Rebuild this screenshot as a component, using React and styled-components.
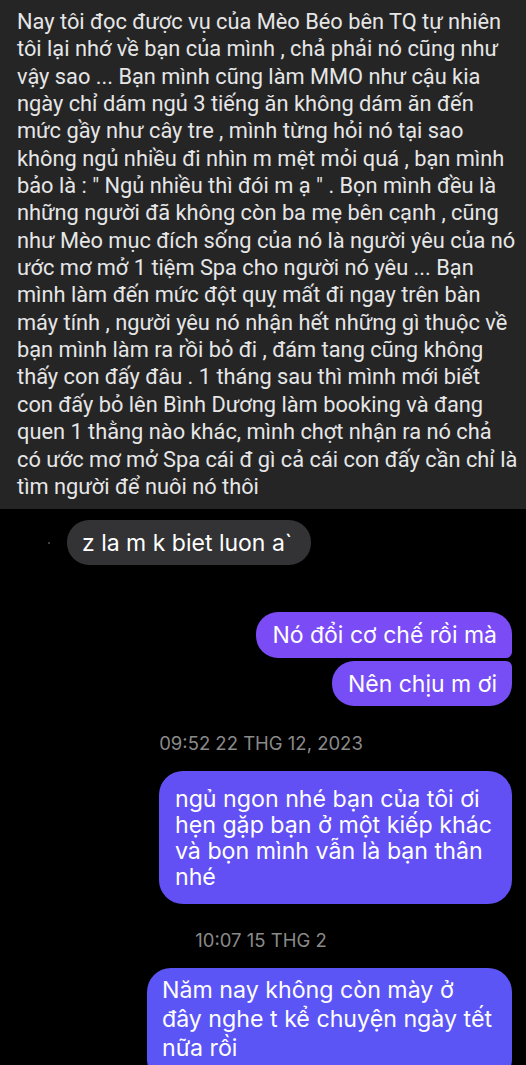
import React from "react";
import styled, { createGlobalStyle } from "styled-components";

const Global = createGlobalStyle`
  html, body { margin: 0; padding: 0; background: #000; }
  body { overflow: hidden; }
  #root { width: 526px; height: 1065px; overflow: hidden; }
`;

const Page = styled.div`
  width: 526px;
  height: 1065px;
  display: flex;
  flex-direction: column;
  background: #000;
  overflow: hidden;
`;

const Post = styled.div`
  flex-shrink: 0;
  background: #252526;
  height: 509px;
  box-sizing: border-box;
  padding: 8px 0 0 17px;
  font-family: Roboto, "Noto Sans", sans-serif;
  font-size: 21.8px;
  line-height: 27.35px;
  color: #e6e6e6;
`;

const Line = styled.div`
  white-space: nowrap;
`;

const Chat = styled.div`
  flex-shrink: 0;
  display: flex;
  flex-direction: column;
  padding: 11px 14px 0 0;
  font-family: Inter, "Noto Sans", sans-serif;
  color: #fff;
`;

const IncomingRow = styled.div`
  display: flex;
  align-items: center;
  gap: 17px;
  padding-left: 48px;
`;

const Dot = styled.span`
  width: 2px;
  height: 2px;
  border-radius: 50%;
  background: #555;
`;

const Bubble = styled.div`
  align-self: ${(p) => (p.$in ? "flex-start" : "flex-end")};
  background: ${(p) => p.$bg};
  color: #fff;
  font-size: ${(p) => p.$fs || 23}px;
  line-height: ${(p) => p.$lh || 26}px;
  padding: ${(p) => p.$pad};
  border-radius: ${(p) => p.$radius || "22px"};
  margin-top: ${(p) => p.$mt || 0}px;
  white-space: nowrap;
`;

const Stamp = styled.div`
  align-self: center;
  margin-left: 10px;
  color: #8a8a8a;
  font-size: 18.5px;
  line-height: 22px;
  margin-top: ${(p) => p.$mt}px;
`;

const postLines = [
  "Nay tôi đọc được vụ của Mèo Béo bên TQ tự nhiên",
  "tôi lại nhớ về bạn của mình , chả phải nó cũng như",
  "vậy sao ... Bạn mình cũng làm MMO như cậu kia",
  "ngày chỉ dám ngủ 3 tiếng ăn không dám ăn đến",
  "mức gầy như cây tre , mình từng hỏi nó tại sao",
  "không ngủ nhiều đi nhìn m mệt mỏi quá , bạn mình",
  "bảo là : \" Ngủ nhiều thì đói m ạ \" . Bọn mình đều là",
  "những người đã không còn ba mẹ bên cạnh , cũng",
  "như Mèo mục đích sống của nó là người yêu của nó",
  "ước mơ mở 1 tiệm Spa cho người nó yêu ... Bạn",
  "mình làm đến mức đột quỵ mất đi ngay trên bàn",
  "máy tính , người yêu nó nhận hết những gì thuộc về",
  "bạn mình làm ra rồi bỏ đi , đám tang cũng không",
  "thấy con đấy đâu . 1 tháng sau thì mình mới biết",
  "con đấy bỏ lên Bình Dương làm booking và đang",
  "quen 1 thằng nào khác, mình chợt nhận ra nó chả",
  "có ước mơ mở Spa cái đ gì cả cái con đấy cần chỉ là",
  "tìm người để nuôi nó thôi",
];

export default function App() {
  return (
    <>
      <Global />
      <Page>
        <Post>
          {postLines.map((l, i) => (
            <Line key={i}>{l}</Line>
          ))}
        </Post>
        <Chat>
          <IncomingRow>
            <Dot />
            <Bubble $in $bg="#333335" $pad="10px 19px 9px 15px">
              z la m k biet luon a`
            </Bubble>
          </IncomingRow>
          <Bubble $bg="#7b4cf6" $pad="10px 15px 10px 16px" $mt={47} $radius="22px 22px 6px 22px">
            Nó đổi cơ chế rồi mà
          </Bubble>
          <Bubble $bg="#774ef6" $pad="10px 15px 9px 16px" $mt={3} $radius="22px 6px 22px 22px">
            Nên chịu m ơi
          </Bubble>
          <Stamp $mt={26}>09:52 22 THG 12, 2023</Stamp>
          <Bubble $bg="#6250f5" $pad="15px 20px 14px 16px" $mt={17} $fs={23.2} $lh={26} $radius="24px">
            ngủ ngon nhé bạn của tôi ơi
            <br />
            hẹn gặp bạn ở một kiếp khác
            <br />
            và bọn mình vẫn là bạn thân
            <br />
            nhé
          </Bubble>
          <Stamp $mt={25}>10:07 15 THG 2</Stamp>
          <Bubble $bg="#5b55f6" $pad="8px 20px 20px 15px" $mt={17} $fs={23.2} $lh={29} $radius="24px">
            Năm nay không còn mày ở
            <br />
            đây nghe t kể chuyện ngày tết
            <br />
            nữa rồi
          </Bubble>
        </Chat>
      </Page>
    </>
  );
}
